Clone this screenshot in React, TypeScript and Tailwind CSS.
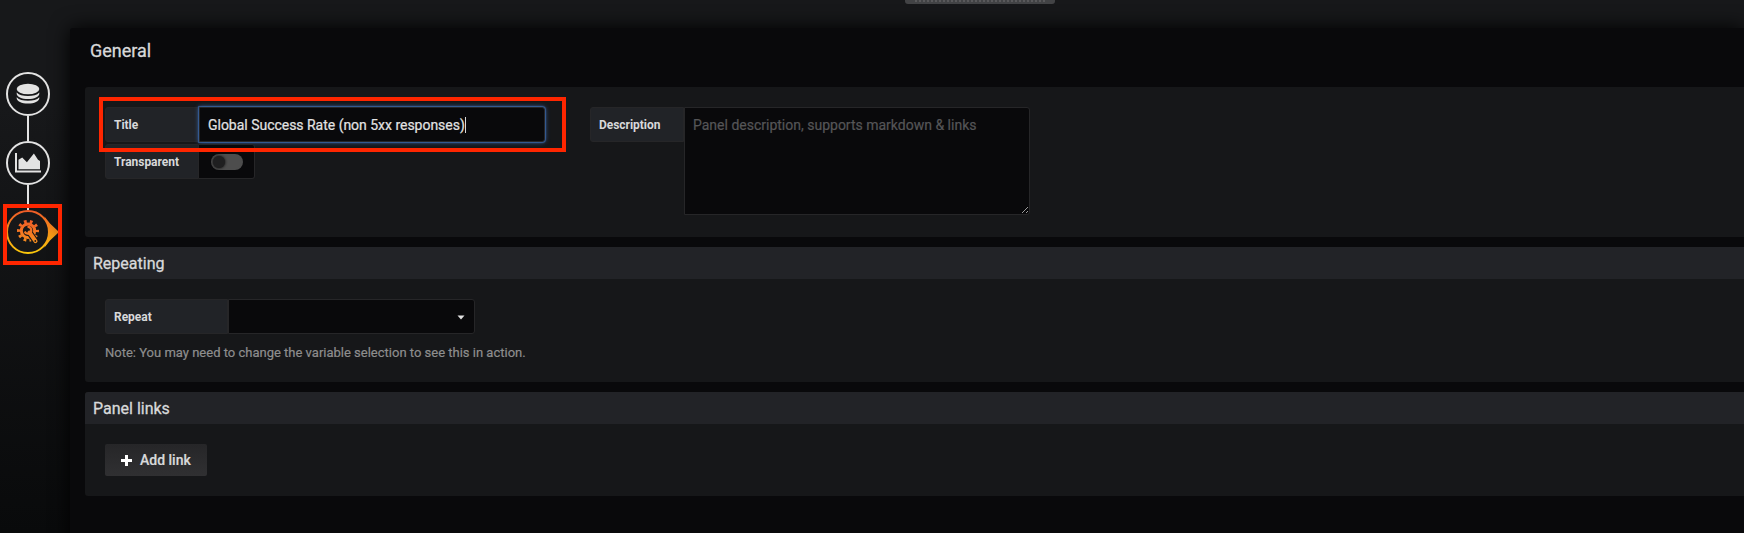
import React from "react";

function Label({ children, className }: { children: React.ReactNode; className: string }) {
  return (
    <div className={`h-[35px] shrink-0 rounded-l-[3px] border border-[#262628] bg-[#212327] pl-2 text-[12px] font-bold leading-[35px] tracking-[-0.03px] text-[#d8d9da] ${className}`}>
      {children}
    </div>
  );
}

function SectionHeader({ children }: { children: React.ReactNode }) {
  return <div className="h-8 rounded-tl-[3px] bg-[#222327] pl-2 text-[16px] leading-[33px] text-[#d8d9da] [-webkit-text-stroke:0.3px]">{children}</div>;
}

function DatabaseIcon() {
  return (
    <svg width="24" height="22" viewBox="0 0 24 22" fill="#e3e3e3">
      <ellipse cx="12" cy="6" rx="11.3" ry="5.3" />
      <path d="M.7 9.500C3 12.200 7 13 12 13s9-.8 11.300-3.500v1.200c0 3-5 5.300-11.300 5.300S.7 13.700.7 10.700z" />
      <path d="M.7 14.300C3 16.900 7 17.800 12 17.800s9-.9 11.300-3.500v1c0 3-5 5.300-11.300 5.300S.7 18.300.7 15.300z" />
    </svg>
  );
}

function ChartIcon() {
  return (
    <svg width="28" height="22" viewBox="0 0 28 22" fill="#e3e3e3">
      <path d="M1 1h2v17.600h24v2H1z" />
      <path d="M4.500 17.300V7.800L8.200 5.400l4.700 4.800 7-8.700 4.100 6.200 2 1.400v8.200z" />
    </svg>
  );
}

function ToolsIcon() {
  return (
    <svg width="56" height="48" viewBox="0 0 56 48">
      <defs>
        <linearGradient id="flame" x1="0" y1="2" x2="0" y2="46" gradientUnits="userSpaceOnUse">
          <stop offset="0" stopColor="#f05a28" />
          <stop offset="1" stopColor="#fbca0a" />
        </linearGradient>
        <linearGradient id="gear" x1="0" y1="11" x2="0" y2="37" gradientUnits="userSpaceOnUse">
          <stop offset="0" stopColor="#f05a28" />
          <stop offset="1" stopColor="#f7941e" />
        </linearGradient>
      </defs>
      <path d="M40.500 8.500L46 15.500 55 24 46 32.500 40.500 39.500z" fill="url(#flame)" />
      <circle cx="24" cy="24" r="21" fill="#161719" stroke="url(#flame)" strokeWidth="2" />
      <g stroke="url(#gear)" fill="none">
        <circle cx="24" cy="22.800" r="6.700" strokeWidth="3" />
        <circle cx="24" cy="22.800" r="9.400" strokeWidth="3.200" strokeDasharray="2.700 3.206" strokeDashoffset="1.350" />
      </g>
      <g strokeLinecap="round" fill="none">
        <path d="M25.500 24.500L31.500 33.200" stroke="#161719" strokeWidth="6.400" />
        <path d="M25.500 24.500L31.500 33.200" stroke="url(#gear)" strokeWidth="4" />
        <path d="M23.500 18.900A3.400 3.400 0 1 1 20.700 23.500" stroke="url(#gear)" strokeWidth="2.200" strokeLinecap="butt" />
      </g>
      <circle cx="31.300" cy="33" r=".9" fill="#161719" />
    </svg>
  );
}

function Sidebar() {
  return (
    <nav className="flex w-[70px] shrink-0 flex-col items-start pl-1.5 pt-[72px]">
      <div className="flex h-11 w-11 items-center justify-center rounded-full border-2 border-[#e3e3e3] bg-[#161719]"><DatabaseIcon /></div>
      <div className="ml-[21px] h-[25px] w-0.5 bg-[#e3e3e3]" />
      <div className="flex h-11 w-11 items-center justify-center rounded-full border-2 border-[#e3e3e3] bg-[#161719]"><ChartIcon /></div>
      <div className="ml-[21px] h-[25px] w-0.5 bg-[#e3e3e3]" />
      <div className="-ml-0.5 -mt-0.5"><ToolsIcon /></div>
    </nav>
  );
}

export default function App() {
  return (
    <div className="relative flex h-[533px] w-[1744px] overflow-hidden bg-linear-to-b from-[#17181a] from-20% to-[#090a0b] font-['Roboto',sans-serif]">
      <Sidebar />
      <main className="mt-7 h-[520px] min-w-0 flex-1 rounded-tl-[3px] bg-[#09090b] pl-[15px] shadow-[0_0_20px_black]">
        <h1 className="h-[59px] pl-[5px] pt-[10px] text-[18px] leading-[26px] text-[#d8d9da] [-webkit-text-stroke:0.3px]">General</h1>
        <section className="flex h-[150px] rounded-l-[3px] bg-[#161719] pl-5 pt-5">
          <div className="flex w-[485px] flex-col gap-0.5">
            <div className="flex">
              <Label className="w-[94px]">Title</Label>
              <div className="flex h-[35px] w-[346px] items-center rounded-r-[3px] border border-[#262628] bg-[#09090b] pl-2 pt-0.5 text-[14px] tracking-[-0.02px] text-[#e3e3e3] shadow-[0_0_5px_#3a6ab5,0_0_1px_1px_#33547f] [-webkit-text-stroke:0.2px]">
                <span>Global Success Rate (non 5xx responses)</span>
                <span className="-mt-0.5 h-4 w-px bg-[#d8d9da]" />
              </div>
            </div>
            <div className="flex">
              <Label className="w-[94px]">Transparent</Label>
              <div className="flex h-[35px] w-14 items-center rounded-r-[3px] border border-l-0 border-[#262628] bg-[#09090b] pl-3">
                <div className="flex h-4 w-8 items-center rounded-full bg-[#4d4d4d] pl-0.5">
                  <div className="h-3 w-3 rounded-full bg-[#1f1f20] shadow-[0_0_3px_black]" />
                </div>
              </div>
            </div>
          </div>
          <div className="flex items-start">
            <Label className="w-[94px]">Description</Label>
            <textarea className="h-[108px] w-[346px] rounded-r-[3px] border border-[#262628] bg-[#09090b] px-2 py-[7px] text-[14px] leading-[21px] outline-none [-webkit-text-stroke:0.2px] placeholder:text-[#555557]" placeholder="Panel description, supports markdown & links" />
          </div>
        </section>
        <section className="mt-2.5 h-[135px] rounded-l-[3px] bg-[#161719]">
          <SectionHeader>Repeating</SectionHeader>
          <div className="pl-5 pt-5">
            <div className="flex">
              <Label className="w-[123px]">Repeat</Label>
              <div className="flex h-[35px] w-[247px] items-center justify-end rounded-r-[3px] border border-[#262628] bg-[#09090b] pr-[9px] pt-0.5">
                <svg width="8" height="5" viewBox="0 0 8 5"><path d="M.5.500h7L4 4.500z" fill="#e3e3e3" /></svg>
              </div>
            </div>
            <p className="pt-2 text-[13px] leading-[21px] text-[#8e8e8e] [-webkit-text-stroke:0.2px]">Note: You may need to change the variable selection to see this in action.</p>
          </div>
        </section>
        <section className="mt-2.5 h-[104px] rounded-l-[3px] bg-[#161719]">
          <SectionHeader>Panel links</SectionHeader>
          <div className="pl-5 pt-5">
            <button className="flex h-8 w-[102px] items-center rounded-[2px] bg-linear-to-b from-[#262628] to-[#303032] pl-4 text-[14px] font-medium text-[#d8d9da] [-webkit-text-stroke:0.2px]">
              <svg className="mr-2" width="11" height="11" viewBox="0 0 11 11"><path d="M4 0h3v4h4v3H7v4H4V7H0V4h4z" fill="#fff" /></svg>
              Add link
            </button>
          </div>
        </section>
      </main>
      <div className="absolute left-[905px] top-0 h-1 w-[150px] rounded-b-[3px] bg-[#424345] px-2.5">
        <div className="h-0.5 bg-[repeating-linear-gradient(90deg,#59595b_0_2px,transparent_2px_4px)]" />
      </div>
      <div className="absolute left-[99px] top-[97px] h-[55px] w-[467px] border-4 border-[#ff2600]" />
      <div className="absolute left-[3px] top-[204px] h-[61px] w-[59px] border-4 border-[#ff2600]" />
    </div>
  );
}
